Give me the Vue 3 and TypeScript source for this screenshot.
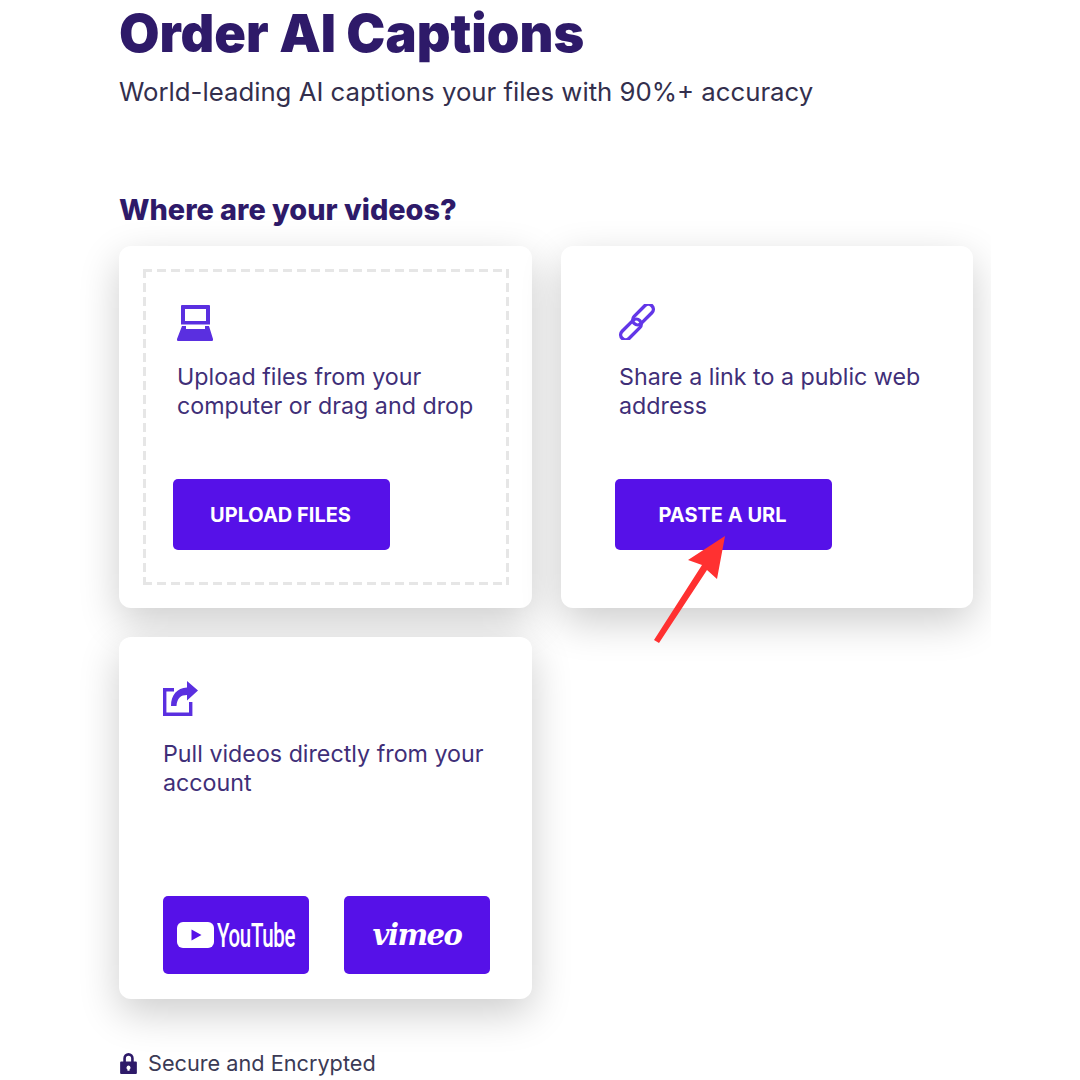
<script setup lang="ts">
const title = 'Order AI Captions'
</script>

<template>
  <div class="page">
    <h1 class="title">{{ title }}</h1>
    <p class="subtitle">World-leading AI captions your files with 90%+ accuracy</p>
    <h2 class="section">Where are your videos?</h2>
    <div class="clip">
      <div class="grid">
        <section class="card upload">
          <div class="dashed">
            <svg class="icon laptop" viewBox="0 0 36 36" width="36" height="36">
              <path fill="#5a2fe0" fill-rule="evenodd" d="M5 0h27a1 1 0 0 1 1 1v18.500H4V1a1 1 0 0 1 1-1zm3 4v12h21V4z" />
              <path fill="#5a2fe0" d="M5 21h4v3h19v-3h4l4 13a1.500 1.500 0 0 1-1.500 2H1.500A1.500 1.500 0 0 1 0 34z" />
            </svg>
            <p class="desc">Upload files from your<br />computer or drag and drop</p>
            <button class="btn upload-btn">UPLOAD FILES</button>
          </div>
        </section>
        <section class="card link">
          <svg class="icon chain" viewBox="0 0 36 36" width="36" height="36" fill="none" stroke="#6236e8" stroke-width="3.400">
            <g transform="rotate(-45 18 18)">
              <rect x="-4" y="14" width="25" height="10" rx="5" />
              <rect x="15" y="12" width="25" height="10" rx="5" />
            </g>
          </svg>
          <p class="desc">Share a link to a public web<br />address</p>
          <button class="btn url-btn">PASTE A URL</button>
        </section>
        <section class="card pull">
          <svg class="icon share" viewBox="0 0 36 36" width="36" height="36">
            <path fill="none" stroke="#5a2fe0" stroke-width="3.400" d="M11 8.700H1.700v24.600h26V21" />
            <path fill="#5a2fe0" d="M24 0l11 9.500-11 10V14c-6 0-10 3-10.500 11H8C8 14 14 7 24 6.500z" />
          </svg>
          <p class="desc">Pull videos directly from your<br />account</p>
          <div class="brands">
            <button class="brand">
              <svg viewBox="0 0 37 26" width="37" height="26">
                <rect width="37" height="26" rx="6" fill="#fff" />
                <path d="M14.500 7.500l10 5.500-10 5.500z" fill="#5611e8" />
              </svg>
              <span class="yt">YouTube</span>
            </button>
            <button class="brand"><span class="vimeo">vimeo</span></button>
          </div>
        </section>
      </div>
    </div>
    <div class="secure">
      <svg viewBox="0 0 18 22" width="19" height="23">
        <path fill="#2e1a69" fill-rule="evenodd" d="M4 9V6a5 5 0 0 1 10 0v3h2a1 1 0 0 1 1 1v10a1 1 0 0 1-1 1H2a1 1 0 0 1-1-1V10a1 1 0 0 1 1-1zm2.500 0h5V6a2.500 2.500 0 0 0-5 0zM9 13a2 2 0 0 0-1 3.700V18h2v-1.300A2 2 0 0 0 9 13z" />
      </svg>
      <span>Secure and Encrypted</span>
    </div>
    <svg class="arrow" viewBox="0 0 90 120" width="90" height="120">
      <path fill="#ff3131" d="M73 5L36 29l14 5L2 109l5 3 48-73 10 9z" />
    </svg>
  </div>
</template>

<style>
html, body { margin: 0; background: #fff; overflow: hidden; }
</style>

<style scoped>
.page {
  position: relative;
  width: 1080px;
  height: 1080px;
  overflow: hidden;
  box-sizing: border-box;
  padding: 0 0 0 119px;
  font-family: Inter, "Noto Sans", sans-serif;
  background: #fff;
}
.title {
  margin: 3px 0 0;
  font-size: 52.300px;
  line-height: 60px;
  font-weight: 900;
  color: #2e1a69;
}
.subtitle {
  margin: 12px 0 0;
  font-size: 25.750px;
  line-height: 34px;
  font-weight: 400;
  color: #332f4d;
}
.section {
  margin: 83px 0 0;
  font-size: 28.850px;
  line-height: 36px;
  font-weight: 800;
  color: #2e1a69;
}
.clip {
  width: 872px;
  overflow: hidden;
  margin: -12px 0 -9px -60px;
  padding: 30px 0 60px 60px;
}
.grid {
  display: grid;
  grid-template-columns: 413px 412px;
  grid-auto-rows: 362px;
  gap: 29px 29px;
}
.card {
  background: #fff;
  border-radius: 12px;
  box-shadow: 0 14px 40px rgba(0, 0, 0, 0.2);
  box-sizing: border-box;
}
.upload { padding: 23px 23px 23px 24px; }
.dashed {
  height: 316px;
  box-sizing: border-box;
  padding: 36px 34px 0;
  display: flex;
  flex-direction: column;
  align-items: flex-start;
  background-image:
    linear-gradient(90deg, #e6e6e6 9px, transparent 9px),
    linear-gradient(90deg, #e6e6e6 9px, transparent 9px),
    linear-gradient(180deg, #e6e6e6 9px, transparent 9px),
    linear-gradient(180deg, #e6e6e6 9px, transparent 9px);
  background-size: 14px 3px, 14px 3px, 3px 14px, 3px 14px;
  background-position: 0 0, 0 100%, 0 0, 100% 0;
  background-repeat: repeat-x, repeat-x, repeat-y, repeat-y;
}
.link {
  padding: 58px 53px 0;
  display: flex;
  flex-direction: column;
  align-items: flex-start;
}
.link .icon { margin-left: 5px; }
.link .desc { margin-left: 5px; }
.icon { display: block; flex: none; }
.desc {
  margin: 22px 0 0;
  font-size: 23.250px;
  line-height: 29px;
  color: #3f2f78;
  white-space: nowrap;
  height: 58px;
}
.dashed .desc { margin-top: 21px; }
.btn {
  margin-top: 59px;
  width: 217px;
  height: 71px;
  border: none;
  border-radius: 5px;
  background: #5611e8;
  color: #fff;
  font-family: inherit;
  font-size: 20px;
  font-weight: 700;
  padding: 0 2px 0 0;
}
.upload-btn { margin-left: -4px; }
.url-btn { margin-left: 1px; }
.pull {
  padding: 44px 44px 0;
  display: flex;
  flex-direction: column;
  align-items: flex-start;
}
.brands {
  display: flex;
  gap: 35px;
  margin-top: 99px;
}
.brand {
  width: 146px;
  height: 78px;
  border: none;
  border-radius: 5px;
  background: #5611e8;
  color: #fff;
  padding: 0;
  display: flex;
  align-items: center;
  justify-content: center;
  gap: 3px;
}
.yt {
  display: inline-block;
  width: 78px;
  font-family: Roboto, sans-serif;
  font-weight: 500;
  font-size: 33px;
  letter-spacing: -0.5px;
  transform: scaleX(0.62);
  transform-origin: left center;
  white-space: nowrap;
}
.vimeo {
  font-family: "DejaVu Serif", serif;
  font-style: italic;
  font-weight: 700;
  font-size: 29px;
  line-height: 40px;
  letter-spacing: -1.500px;
}
.secure {
  display: flex;
  align-items: center;
  gap: 10px;
  margin-top: -7px;
  font-size: 21.700px;
  color: #3b3a55;
}
.arrow {
  position: absolute;
  left: 652px;
  top: 531px;
}
</style>
